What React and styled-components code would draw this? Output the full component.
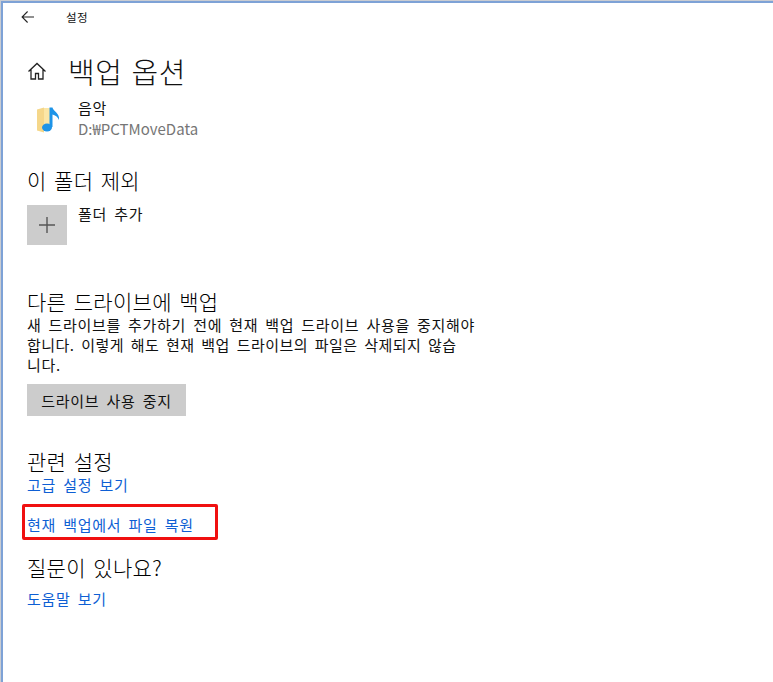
import React from 'react';
import styled, { createGlobalStyle } from 'styled-components';

const GlobalStyle = createGlobalStyle`
  html, body {
    margin: 0;
    padding: 0;
    background: #fff;
  }
`;

const Window = styled.div`
  width: 773px;
  height: 682px;
  box-sizing: border-box;
  padding: 2px 0 0 3px;
  box-shadow: inset 1px 1px 0 #c9ccd2, inset 3px 3px 0 #7ea2d6;
  background: #fff;
  color: #111;
  overflow: hidden;
  font-family: "Noto Sans CJK KR", "Open Sans", sans-serif;
`;

const TitleBar = styled.div`
  display: flex;
  align-items: center;
  height: 30px;
  padding-left: 18px;
`;

const TitleText = styled.span`
  margin-left: 31px;
  font-size: 11.5px;
  letter-spacing: 0.3px;
`;

const Content = styled.div`
  padding-left: 24px;
  width: 470px;
  font-size: 15px;
  letter-spacing: 0.75px;
  word-spacing: 3px;
`;

const PageHeader = styled.div`
  display: flex;
  align-items: center;
  height: 44px;
  margin-top: 17px;
`;

const PageTitle = styled.h1`
  margin: 0 0 0 21px;
  font-size: 29px;
  font-weight: 300;
  letter-spacing: 0.6px;
  word-spacing: 2px;
`;

const FolderRow = styled.div`
  display: flex;
  height: 44px;
  margin-top: 4px;
`;

const FolderIcon = styled.div`
  width: 26px;
  padding: 10px 0 0 10px;
`;

const FolderText = styled.div`
  margin-left: 15px;
  line-height: 21px;
`;

const Muted = styled.div`
  color: #767676;
  letter-spacing: 0;
`;

const SectionTitle = styled.h2`
  margin: ${({ $top }) => $top}px 0 0;
  font-size: 21px;
  font-weight: 300;
  color: #000;
  line-height: 28px;
  letter-spacing: 0.3px;
  word-spacing: 2.5px;
`;

const AddRow = styled.div`
  display: flex;
  margin-top: 11px;
`;

const AddTile = styled.div`
  width: 40px;
  height: 40px;
  display: flex;
  align-items: center;
  justify-content: center;
  background: #cccccc;
`;

const AddLabel = styled.span`
  margin-left: 11px;
  line-height: 18px;
`;

const Body = styled.p`
  margin: 0;
  line-height: 20px;
`;

const BodyLine = styled.span`
  display: block;
  letter-spacing: ${({ $tracking }) => $tracking}px;
`;

const Button = styled.button`
  display: block;
  height: 32px;
  width: 159px;
  margin-top: 9px;
  padding: 0;
  border: 0;
  background: #cccccc;
  color: #111;
  font: inherit;
  letter-spacing: inherit;
  word-spacing: inherit;
`;

const LinkText = styled.a`
  display: block;
  margin-top: ${({ $top }) => $top || 0}px;
  color: #0e5fd4;
  line-height: 20px;
`;

const Highlight = styled.div`
  width: 188px;
  height: 24px;
  margin: 9px 0 0 -5px;
  padding: 6px 0 0 2px;
  display: flex;
  align-items: center;
  border: 3px solid #f01010;
  border-radius: 2px;
`;

const App = () => (
  <>
    <GlobalStyle />
    <Window>
      <TitleBar>
        <svg width="14" height="14" viewBox="0 0 14 14" fill="none" stroke="#222" strokeWidth="1.1">
          <path d="M13 7H1.2M6.6 1.5L1.1 7l5.5 5.5" />
        </svg>
        <TitleText>설정</TitleText>
      </TitleBar>
      <Content>
        <PageHeader>
          <svg width="20" height="20" viewBox="0 0 20 20" fill="none" stroke="#222" strokeWidth="1.3">
            <path d="M1.5 10.5L10 2.5l8.5 8M4 8.5V18h4.5v-5.5h3V18H16V8.5" />
          </svg>
          <PageTitle>백업 옵션</PageTitle>
        </PageHeader>
        <FolderRow>
          <FolderIcon>
            <svg width="24" height="27" viewBox="0 0 24 27">
              <path d="M6 1h9v19H6z" fill="#fbe6a6" />
              <path d="M0 2.5L7 .5v25l-7-2z" fill="#f5d78a" />
              <path d="M12.5.5h3c.5 3.5 7.5 5.5 6.5 12.5-1-3-4-5-6.5-5.5V20h-3z" fill="#1e94e8" />
              <ellipse cx="10" cy="20.5" rx="5" ry="4" fill="#1e94e8" />
            </svg>
          </FolderIcon>
          <FolderText>
            <div>음악</div>
            <Muted>D:₩PCTMoveData</Muted>
          </FolderText>
        </FolderRow>
        <SectionTitle $top={25}>이 폴더 제외</SectionTitle>
        <AddRow>
          <AddTile>
            <svg width="16" height="16" viewBox="0 0 16 16" stroke="#555" strokeWidth="1.4">
              <path d="M8 0v16M0 8h16" />
            </svg>
          </AddTile>
          <AddLabel>폴더 추가</AddLabel>
        </AddRow>
        <SectionTitle $top={42}>다른 드라이브에 백업</SectionTitle>
        <Body>
          <BodyLine $tracking={0.7}>새 드라이브를 추가하기 전에 현재 백업 드라이브 사용을 중지해야</BodyLine>
          <BodyLine $tracking={0.45}>합니다. 이렇게 해도 현재 백업 드라이브의 파일은 삭제되지 않습</BodyLine>
          <BodyLine $tracking={0.75}>니다.</BodyLine>
        </Body>
        <Button>드라이브 사용 중지</Button>
        <SectionTitle $top={31}>관련 설정</SectionTitle>
        <LinkText>고급 설정 보기</LinkText>
        <Highlight>
          <LinkText>현재 백업에서 파일 복원</LinkText>
        </Highlight>
        <SectionTitle $top={13}>질문이 있나요?</SectionTitle>
        <LinkText $top={8}>도움말 보기</LinkText>
      </Content>
    </Window>
  </>
);

export default App;
